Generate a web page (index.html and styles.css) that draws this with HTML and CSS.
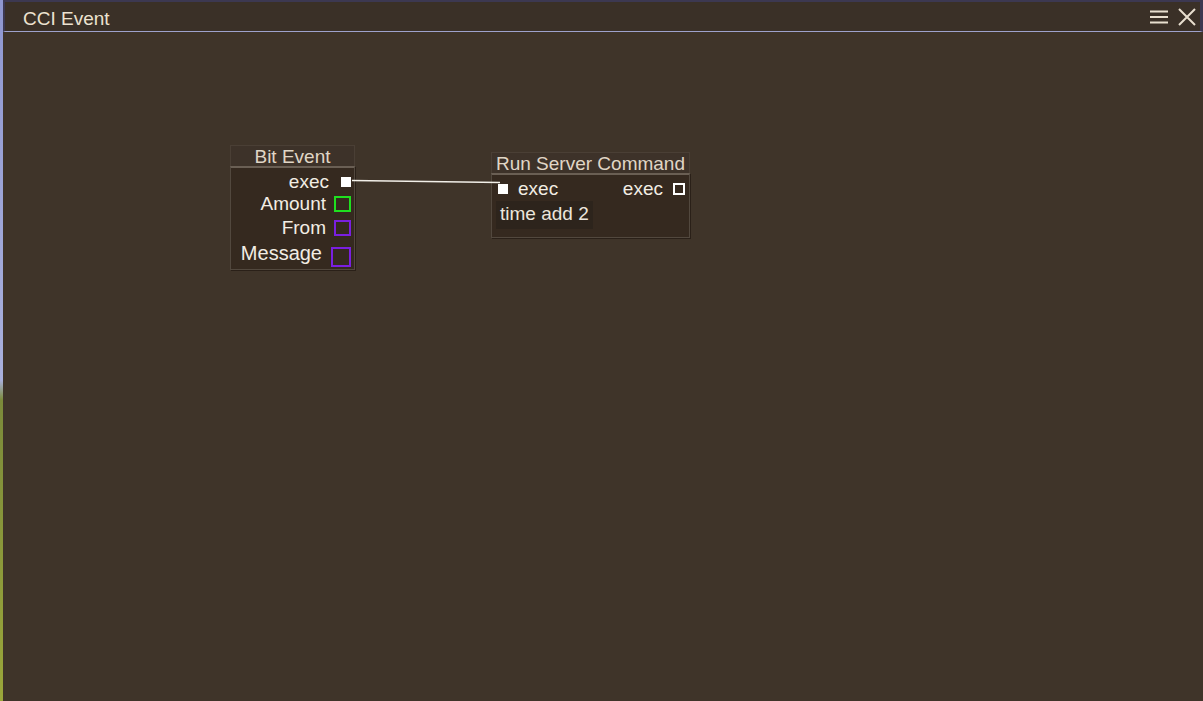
FILE: index.html
```html
<!DOCTYPE html>
<html lang="en">
<head>
    <meta charset="UTF-8">
    <title>CCI Event</title>
    <link rel="stylesheet" href="styles.css">
</head>
<body>
    <div class="window">
        <!-- Title bar -->
        <div class="titlebar">
            <span class="title">CCI Event</span>
            <div class="controls">
                <svg class="icon" width="18" height="14" viewBox="0 0 18 14">
                    <path d="M0 1.5H18M0 7H18M0 12.5H18" stroke="#e8dfcf" stroke-width="2"/>
                </svg>
                <svg class="icon" width="18" height="18" viewBox="0 0 18 18">
                    <path d="M1 1L17 17M17 1L1 17" stroke="#e8dfcf" stroke-width="2"/>
                </svg>
            </div>
        </div>

        <!-- Node canvas -->
        <div class="canvas">
            <div class="node bit-event">
                <div class="node-head">Bit Event</div>
                <div class="node-body">
                    <div class="row out"><span>exec</span><i class="pin exec-fill"></i></div>
                    <div class="row out"><span>Amount</span><i class="pin green"></i></div>
                    <div class="row out"><span>From</span><i class="pin purple"></i></div>
                    <div class="row out"><span>Message</span><i class="pin purple big"></i></div>
                </div>
            </div>

            <div class="node server-cmd">
                <div class="node-head">Run Server Command</div>
                <div class="node-body">
                    <div class="row split">
                        <div class="side"><i class="pin exec-fill"></i><span>exec</span></div>
                        <div class="side"><span>exec</span><i class="pin exec-open"></i></div>
                    </div>
                    <div class="field">time add 2</div>
                </div>
            </div>

            <!-- links drawn over the nodes -->
            <svg class="wires" width="1200" height="668">
                <line x1="349" y1="148.5" x2="497" y2="150.5" stroke="#f2efe8" stroke-width="1.5"/>
            </svg>
        </div>
    </div>
</body>
</html>
```

FILE: styles.css
```css
body {
    margin: 0;
    height: 701px;
    overflow: hidden;
    font-family: 'Liberation Sans', Arial, sans-serif;
    background: linear-gradient(#8f97d0 0, #a9b0dc 380px, #7b8a3a 400px, #9aa63a 701px);
}
.window {
    margin-left: 3px;
    height: 701px;
    background-color: #3f3429;
    display: flex;
    flex-direction: column;
}
.titlebar {
    height: 29px;
    border-top: 2px solid #3c3851;
    border-left: 2px solid #3c3851;
    border-right: 3px solid #3c3851;
    border-bottom: 1px solid #9ea2cc;
    background-color: #3a3027;
    display: flex;
    align-items: center;
    justify-content: space-between;
    padding: 0 4px 0 18px;
}
.title {
    font-size: 19px;
    color: #ece2d0;
    margin-top: 4px;
}
.controls {
    display: flex;
    align-items: center;
    gap: 10px;
}
.canvas {
    position: relative;
    flex: 1;
}
.wires {
    position: absolute;
    left: 0;
    top: 0;
    pointer-events: none;
}
.node {
    position: absolute;
    color: #f2ede4;
    font-size: 19px;
}
.node-head {
    height: 20px;
    line-height: 22px;
    text-align: center;
    color: #e0d6c6;
    background-color: #3d3229;
    border: 1px solid #4a3f35;
    border-bottom: none;
}
.node-body {
    background-color: #35291f;
    border: 1px solid #52483e;
    border-top: 2px solid #6a5f54;
    box-shadow: 1px 1px 0 #2a2018;
}
.bit-event {
    left: 227px;
    top: 113px;
    width: 125px;
}
.bit-event .node-body {
    height: 104px;
    padding-top: 4px;
    box-sizing: border-box;
}
.row {
    display: flex;
    align-items: center;
}
.row.out {
    justify-content: flex-end;
    gap: 8px;
    height: 24px;
    padding-right: 3px;
}
.bit-event .row.out:first-child {
    height: 20px;
    gap: 12px;
    padding-right: 3px;
}
.bit-event .row.out:last-child {
    height: 27px;
    gap: 9px;
    font-size: 20px;
}
.server-cmd {
    left: 488px;
    top: 120px;
    width: 199px;
}
.server-cmd .node-body {
    height: 65px;
    padding: 2px 4px 0 4px;
    box-sizing: border-box;
}
.split {
    justify-content: space-between;
    height: 24px;
}
.side {
    display: flex;
    align-items: center;
    gap: 10px;
}
.side:first-child {
    padding-left: 2px;
}
.field {
    display: inline-block;
    margin-top: 0;
    padding: 2px 4px 4px 4px;
    background-color: #2d241c;
    color: #ece6dc;
}
.pin {
    display: inline-block;
    box-sizing: border-box;
}
.exec-fill {
    width: 10px;
    height: 10px;
    background-color: #ffffff;
}
.exec-open {
    width: 12px;
    height: 12px;
    border: 2px solid #ffffff;
}
.green {
    width: 17px;
    height: 16px;
    border: 2px solid #1fe01f;
}
.purple {
    width: 17px;
    height: 16px;
    border: 2px solid #7a1fe0;
}
.purple.big {
    width: 20px;
    height: 20px;
    margin-top: 6px;
}
```
